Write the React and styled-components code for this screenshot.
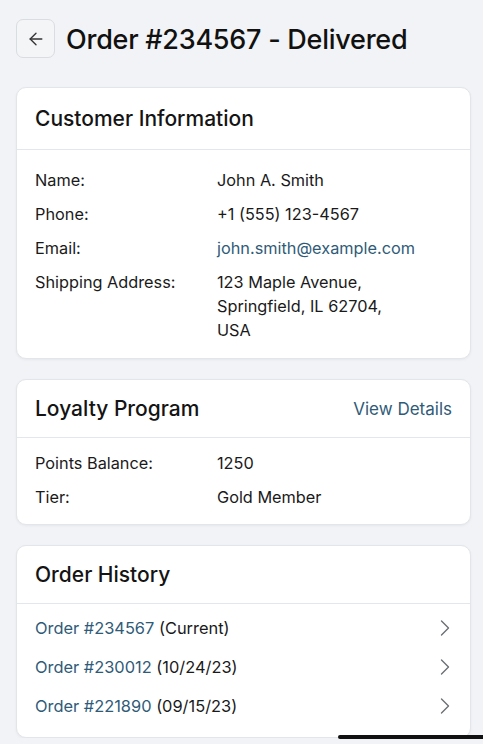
import styled, { createGlobalStyle } from "styled-components";
import { ArrowLeft, ChevronRight } from "lucide-react";

const GlobalStyle = createGlobalStyle`
  html, body {
    margin: 0;
    padding: 0;
    background: #f1f3f6;
    font-family: Inter, "Noto Sans", Arial, sans-serif;
    color: #141414;
    overflow: hidden;
  }
  * { box-sizing: border-box; }
`;

const Page = styled.main`
  display: flex;
  flex-direction: column;
  gap: 20px;
  padding: 19px 12px 0 16px;
`;

const TopBar = styled.header`
  display: flex;
  align-items: center;
  gap: 11px;
  margin-bottom: 9px;
`;

const BackButton = styled.button`
  width: 39px;
  height: 39px;
  flex-shrink: 0;
  display: flex;
  align-items: center;
  justify-content: center;
  background: #f4f5f7;
  border: 1px solid #d9dce1;
  border-radius: 7px;
  color: #333;
  padding: 0;
`;

const Title = styled.h1`
  margin: 0;
  padding-top: 2px;
  font-size: 27px;
  font-weight: 500;
  line-height: 32px;
  letter-spacing: -0.25px;
  color: #111;
`;

const Card = styled.section`
  background: #fff;
  border: 1px solid #e2e5e9;
  border-radius: 10px;
  box-shadow: 0 1px 3px rgba(0, 0, 0, 0.05);
  overflow: hidden;
`;

const CardHeader = styled.div`
  display: flex;
  align-items: center;
  justify-content: space-between;
  height: ${(p) => p.$h || 60}px;
  padding: 0 18px;
  border-bottom: 1px solid #e3e6ea;
`;

const CardTitle = styled.h2`
  margin: 0;
  font-size: 21px;
  font-weight: 500;
  color: #141414;
`;

const HeaderLink = styled.a`
  font-size: 17px;
  color: #2f5b78;
  text-decoration: none;
`;

const InfoGrid = styled.dl`
  display: grid;
  grid-template-columns: 182px 1fr;
  row-gap: 10px;
  margin: 0;
  padding: ${(p) => p.$pad || "14px 18px 16px"};
  font-size: 16.3px;
  line-height: 24px;
`;

const Label = styled.dt`
  color: #1a1a1a;
`;

const Value = styled.dd`
  margin: 0;
  color: ${(p) => (p.$link ? "#2f5b78" : "#1a1a1a")};
`;

const HistoryList = styled.ul`
  list-style: none;
  margin: 0;
  padding: 4px 18px 12px;
`;

const HistoryRow = styled.li`
  display: flex;
  align-items: center;
  justify-content: space-between;
  height: 39px;
  font-size: 16.4px;
  color: #1a1a1a;
`;

const OrderLink = styled.span`
  color: #2f5b78;
`;

const Chevron = styled(ChevronRight)`
  color: #6b6f75;
  margin-right: -7px;
`;

const HomeIndicator = styled.div`
  position: fixed;
  left: 338px;
  bottom: 5px;
  width: 160px;
  height: 4px;
  border-radius: 2px;
  background: #111;
`;

const customer = [
  { label: "Name:", value: "John A. Smith" },
  { label: "Phone:", value: "+1 (555) 123-4567" },
  { label: "Email:", value: "john.smith@example.com", link: true },
  {
    label: "Shipping Address:",
    value: (
      <>
        123 Maple Avenue,
        <br />
        Springfield, IL 62704,
        <br />
        USA
      </>
    ),
  },
];

const orders = [
  { id: "#234567", note: "(Current)" },
  { id: "#230012", note: "(10/24/23)" },
  { id: "#221890", note: "(09/15/23)" },
];

export default function App() {
  return (
    <>
      <GlobalStyle />
      <Page>
        <TopBar>
          <BackButton aria-label="Back">
            <ArrowLeft size={20} strokeWidth={1.6} />
          </BackButton>
          <Title>Order #234567 - Delivered</Title>
        </TopBar>

        <Card>
          <CardHeader $h={62}>
            <CardTitle>Customer Information</CardTitle>
          </CardHeader>
          <InfoGrid $pad="18px 18px 16px">
            {customer.map((row) => (
              <>
                <Label key={row.label}>{row.label}</Label>
                <Value $link={row.link}>{row.value}</Value>
              </>
            ))}
          </InfoGrid>
        </Card>

        <Card>
          <CardHeader $h={58}>
            <CardTitle>Loyalty Program</CardTitle>
            <HeaderLink href="#">View Details</HeaderLink>
          </CardHeader>
          <InfoGrid $pad="13px 18px 15px">
            <Label>Points Balance:</Label>
            <Value>1250</Value>
            <Label>Tier:</Label>
            <Value>Gold Member</Value>
          </InfoGrid>
        </Card>

        <Card>
          <CardHeader $h={58}>
            <CardTitle>Order History</CardTitle>
          </CardHeader>
          <HistoryList>
            {orders.map((o) => (
              <HistoryRow key={o.id}>
                <span>
                  <OrderLink>Order {o.id}</OrderLink> {o.note}
                </span>
                <Chevron size={28} strokeWidth={1.2} />
              </HistoryRow>
            ))}
          </HistoryList>
        </Card>
      </Page>
      <HomeIndicator />
    </>
  );
}
